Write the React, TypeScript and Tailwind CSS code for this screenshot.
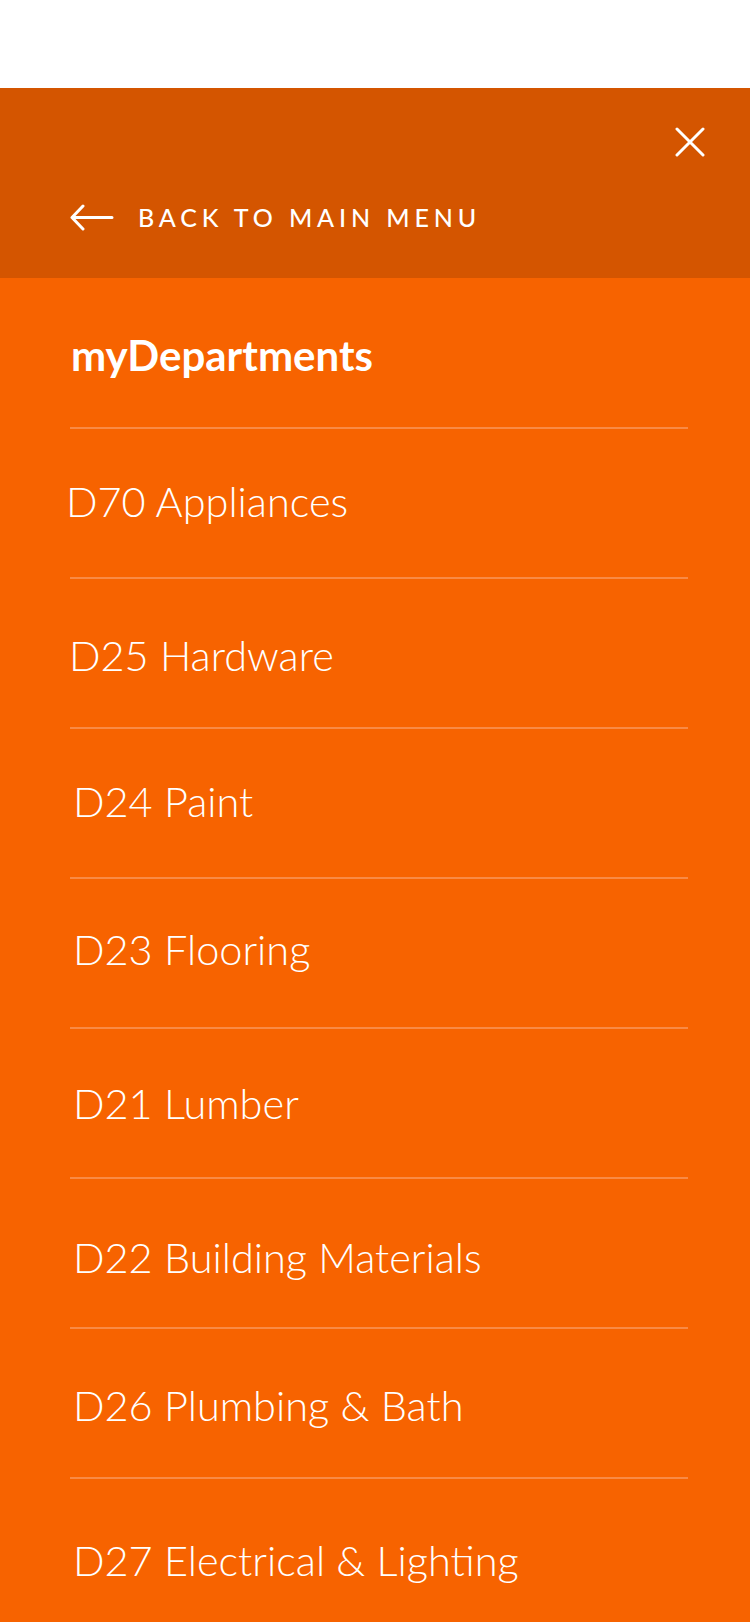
const departments = [
  { label: 'D70 Appliances', tweak: 'pl-0 -translate-y-[1px]' },
  { label: 'D25 Hardware', tweak: 'pl-[3px] translate-y-[3px]' },
  { label: 'D24 Paint', tweak: 'pl-[7px] -translate-y-[1px]' },
  { label: 'D23 Flooring', tweak: 'pl-[7px] -translate-y-[3px]' },
  { label: 'D21 Lumber', tweak: 'pl-[7px] translate-y-[1px]' },
  { label: 'D22 Building Materials', tweak: 'pl-[7px] translate-y-[5px]' },
  { label: 'D26 Plumbing & Bath', tweak: 'pl-[7px] translate-y-[3px]' },
  { label: 'D27 Electrical & Lighting', tweak: 'pl-[7px] translate-y-[7px]' },
]

export default function App() {
  return (
    <div className="w-[750px] h-[1624px] overflow-hidden bg-white font-['Lato',sans-serif] text-white">
      <div className="h-[88px] bg-white" />

      {/* Dark header with close + back link */}
      <header className="h-[190px] bg-[#d45500] flex flex-col pl-[70px] pr-[45px]">
        <div className="flex justify-end pt-[39px]">
          <button aria-label="Close" className="w-[30px] h-[30px]">
            <svg viewBox="0 0 30 30" className="w-[30px] h-[30px]" fill="none" stroke="white" strokeWidth="3" strokeLinecap="round">
              <path d="M2 2 L28 28 M28 2 L2 28" />
            </svg>
          </button>
        </div>
        <a className="flex items-center gap-[24px] mt-[47px]">
          <svg viewBox="0 0 44 27" className="w-[44px] h-[27px]" fill="none" stroke="white" strokeWidth="3" strokeLinecap="round" strokeLinejoin="round">
            <path d="M2 13.5 H42 M13 2 L2 13.5 L13 25" />
          </svg>
          <span className="text-[25px] font-medium tracking-[0.195em] leading-none">BACK TO MAIN MENU</span>
        </a>
      </header>

      {/* Department list */}
      <main className="bg-[#f76300] pl-[70px] pr-[62px] h-[1344px]">
        <div className="h-[151px] flex items-center border-b-2 border-[#f98a45]">
          <h2 className="text-[42px] font-bold leading-none pl-[1px] mt-[4px]">myDepartments</h2>
        </div>
        <ul>
          {departments.map((d, i) => (
            <li
              key={d.label}
              className={`h-[150px] flex items-center ${i < departments.length - 1 ? 'border-b-2 border-[#f98a45]' : ''}`}
            >
              <span className={`text-[41.5px] font-light leading-none -ml-[4px] ${d.tweak}`}>{d.label}</span>
            </li>
          ))}
        </ul>
      </main>
    </div>
  )
}
